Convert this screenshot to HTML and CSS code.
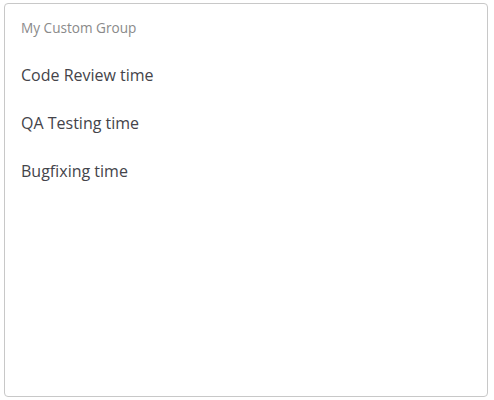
FILE: index.html
```html
<!DOCTYPE html>
<html>
<head>
<meta charset="utf-8">
<link rel="stylesheet" href="styles.css">
</head>
<body>
<div class="panel">
  <div class="group-title">My Custom Group</div>
  <ul class="items">
    <li class="item">Code Review time</li>
    <li class="item">QA Testing time</li>
    <li class="item">Bugfixing time</li>
  </ul>
</div>
</body>
</html>
```
FILE: styles.css
```css
html, body {
  margin: 0;
  padding: 0;
  background: #ffffff;
}
body {
  padding: 3px 0 0 4px;
  font-family: "Open Sans", "Liberation Sans", sans-serif;
}
.panel {
  box-sizing: border-box;
  width: 484px;
  height: 394px;
  border: 1px solid #c8c8c8;
  border-radius: 4px;
  padding: 12px 16px 0 16px;
}
.group-title {
  font-size: 13.6px;
  line-height: 24px;
  color: #8a8a8a;
  padding-bottom: 11px;
}
.items {
  list-style: none;
  margin: 0;
  padding: 0;
}
.item {
  font-size: 16px;
  line-height: 48px;
  height: 48px;
  color: #44444a;
}
```
